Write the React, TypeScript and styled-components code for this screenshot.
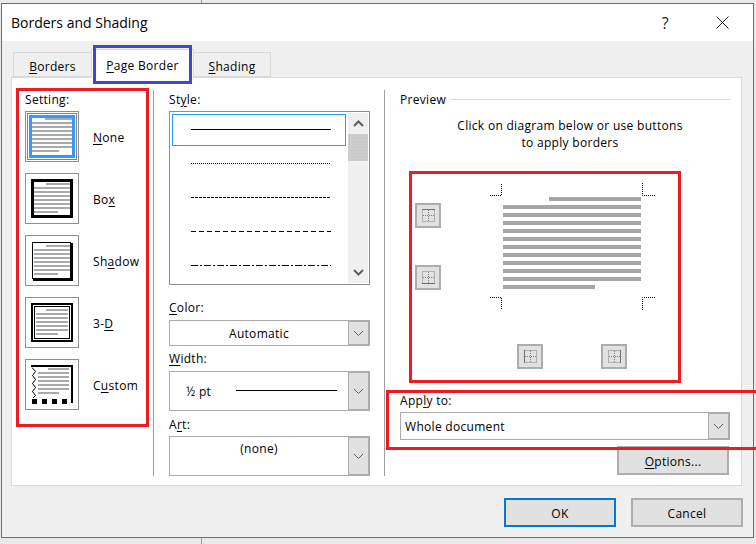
import React from "react";
import styled, { createGlobalStyle } from "styled-components";

const Global = createGlobalStyle`
  html, body { margin: 0; padding: 0; }
  body { font-family: "Open Sans", "Noto Sans", sans-serif; font-size: 12px; letter-spacing: 0.3px; color: #000; }
  * { box-sizing: border-box; }
  u { text-underline-offset: 2px; text-decoration-thickness: 1px; }
`;

const Page = styled.div`
  position: relative;
  width: 756px;
  height: 544px;
  overflow: hidden;
  padding: 3px 2px 6px 1px;
  background: linear-gradient(#9c9c9c, #9c9c9c) 201px 0 / 1px 100% no-repeat, #e9e9e9;
`;
const Dialog = styled.div`
  width: 753px;
  height: 535px;
  display: flex;
  flex-direction: column;
  background: #f0f0f0;
  border: 1px solid #2f7fc1;
`;
const TitleBar = styled.div`
  height: 37px;
  flex: none;
  display: flex;
  align-items: center;
  background: #fff;
  padding: 0 24px 0 9px;
`;
const Title = styled.div`
  font-size: 14px;
  letter-spacing: 0;
  flex: 1;
`;
const Help = styled.div`
  font-size: 16px;
  margin-right: 47px;
  color: #222;
`;
const TabRow = styled.div`
  height: 36px;
  flex: none;
  display: flex;
  align-items: flex-end;
  padding-left: 12px;
`;
const Tab = styled.div<{ $active?: boolean; $w: number }>`
  width: ${(p) => p.$w}px;
  height: ${(p) => (p.$active ? 29 : 25)}px;
  margin-bottom: ${(p) => (p.$active ? -1 : 0)}px;
  margin-left: -1px;
  background: ${(p) => (p.$active ? "#fff" : "#f0f0f0")};
  border: 1px solid #d9d9d9;
  border-bottom: ${(p) => (p.$active ? "none" : "1px solid #d9d9d9")};
  display: flex;
  align-items: center;
  justify-content: center;
  padding-top: ${(p) => (p.$active ? 2 : 3)}px;
  position: relative;
  z-index: ${(p) => (p.$active ? 1 : 0)};
`;
const Panel = styled.div`
  margin-left: 9px;
  width: 731px;
  height: 409px;
  flex: none;
  display: flex;
  background: #fff;
  border: 1px solid #d9d9d9;
`;
const SettingColumn = styled.div`
  width: 141px;
  flex: none;
  padding: 14px 0 0 13px;
`;
const Divider = styled.div`
  width: 1px;
  height: 386px;
  margin-top: 12px;
  flex: none;
  background: #a0a0a0;
`;
const StyleColumn = styled.div`
  width: 230px;
  flex: none;
  padding: 14px 14px 0 15px;
`;
const PreviewColumn = styled.div`
  width: 345px;
  flex: none;
  padding: 13px 0 0 15px;
`;
const FieldLabel = styled.div<{ $top?: number; $bottom?: number; $nudge?: number }>`
  height: 16px;
  line-height: 16px;
  margin-top: ${(p) => p.$top ?? 0}px;
  margin-bottom: ${(p) => p.$bottom ?? 4}px;
  padding-top: ${(p) => p.$nudge ?? 0}px;
`;
const OptionList = styled.div`
  display: flex;
  flex-direction: column;
  gap: 11px;
`;
const OptionRow = styled.div`
  display: flex;
  align-items: center;
  gap: 14px;
`;
const OptionText = styled.span`
  padding-top: 2px;
`;
const OptionButton = styled.div`
  width: 54px;
  height: 51px;
  border: 1px solid #8f8f8f;
  background: #fff;
  flex: none;
  svg { display: block; }
`;
const StyleList = styled.div`
  width: 201px;
  height: 174px;
  display: flex;
  border: 1px solid #8f8f8f;
  padding: 1px;
`;
const StyleRows = styled.div`
  width: 177px;
  flex: none;
  padding: 1px 2px 0 1px;
  display: flex;
  flex-direction: column;
  gap: 2px;
`;
const StyleRow = styled.div<{ $selected?: boolean }>`
  height: 32px;
  flex: none;
  border: 1px solid ${(p) => (p.$selected ? "#3399ff" : "transparent")};
  padding: 0 0 2px 18px;
  display: flex;
  align-items: center;
  svg { display: block; }
`;
const Scrollbar = styled.div`
  width: 20px;
  flex: none;
  display: flex;
  flex-direction: column;
  align-items: center;
  background: #f0f0f0;
`;
const ScrollEnd = styled.div`
  height: 21px;
  flex: none;
  display: flex;
  align-items: center;
  justify-content: center;
`;
const ScrollTrack = styled.div`
  flex: 1;
  width: 100%;
`;
const ScrollThumb = styled.div`
  height: 27px;
  width: 100%;
  background-color: #cdcdcd;
  background-image: radial-gradient(#c3c3c3 0.6px, transparent 0.7px);
  background-size: 3px 3px;
`;
const Field = styled.div<{ $h: number; $w?: number }>`
  width: ${(p) => p.$w ?? 201}px;
  height: ${(p) => p.$h}px;
  display: flex;
  background: #fff;
  border: 1px solid #ababab;
`;
const FieldValue = styled.div<{ $mode?: "center" | "top" | "left" | "sample" }>`
  flex: 1;
  min-width: 0;
  display: flex;
  line-height: 16px;
  align-items: ${(p) => (p.$mode === "top" ? "flex-start" : "center")};
  justify-content: ${(p) => (p.$mode === "left" || p.$mode === "sample" ? "flex-start" : "center")};
  padding-top: ${(p) => (p.$mode === "top" ? 4 : 2)}px;
  padding-left: ${(p) => (p.$mode === "left" ? 4 : p.$mode === "sample" ? 16 : 0)}px;
`;
const WidthSample = styled.div`
  width: 101px;
  height: 1px;
  margin-left: auto;
  margin-right: 11px;
  margin-top: -3px;
  background: #000;
`;
const FieldArrow = styled.div`
  width: 22px;
  flex: none;
  margin: -1px -1px -1px 0;
  display: flex;
  align-items: center;
  justify-content: center;
  background: #e1e1e1;
  border: 2px solid #adadad;
  border-left-width: 1px;
`;
const PreviewHeader = styled.div`
  height: 16px;
  display: flex;
  align-items: center;
  width: 330px;
`;
const PreviewRule = styled.div`
  flex: 1;
  height: 1px;
  margin-left: 4px;
  background: #d9d9d9;
`;
const Instructions = styled.div`
  margin: 10px 0 0 5px;
  width: 330px;
  text-align: center;
  line-height: 17px;
`;
const DiagramTop = styled.div`
  margin-top: 30px;
  display: flex;
  padding-left: 15px;
  gap: 47px;
`;
const SideButtons = styled.div`
  padding-top: 22px;
  display: flex;
  flex-direction: column;
  gap: 37px;
`;
const BottomButtons = styled.div`
  margin-top: 32px;
  padding-left: 117px;
  display: flex;
  gap: 58px;
`;
const EdgeButton = styled.div`
  width: 26px;
  height: 25px;
  display: flex;
  align-items: center;
  justify-content: center;
  background: #e1e1e1;
  border: 2px solid #adadad;
  flex: none;
`;
const OptionsRow = styled.div`
  width: 329px;
  margin-top: 6px;
  display: flex;
  justify-content: flex-end;
`;
const Push = styled.div<{ $primary?: boolean }>`
  width: 112px;
  height: 29px;
  display: flex;
  align-items: center;
  justify-content: center;
  padding-top: 2px;
  background: #e1e1e1;
  border: ${(p) => (p.$primary ? "2px solid #0078d7" : "2px solid #adadad")};
`;
const Footer = styled.div`
  flex: 1;
  display: flex;
  justify-content: flex-end;
  gap: 15px;
  padding: 12px 10px 0 0;
`;
const Annotation = styled.div<{ $x: number; $y: number; $w: number; $h: number; $blue?: boolean }>`
  position: absolute;
  left: ${(p) => p.$x}px;
  top: ${(p) => p.$y}px;
  width: ${(p) => p.$w}px;
  height: ${(p) => p.$h}px;
  border: 3px solid ${(p) => (p.$blue ? "#3f48cc" : "#ed1c24")};
  z-index: 5;
  pointer-events: none;
`;

const G = "#a9a9a9";

function TextLines({ x, w, short, y, rows, lastW }: { x: number; w: number; short: number; y: number; rows: number; lastW: number }) {
  return (
    <g fill={G}>
      {Array.from({ length: rows }).map((_, i) => {
        const first = i === 0;
        const last = i === rows - 1;
        const rx = first ? x + w - short : x;
        const rw = first ? short : last ? lastW : w;
        return <rect key={i} x={rx} y={y + i * 4} width={rw} height={2} />;
      })}
    </g>
  );
}

const Thumb = ({ children }: { children: React.ReactNode }) => (
  <OptionButton>
    <svg width="52" height="49" viewBox="0 0 52 49">
      {children}
    </svg>
  </OptionButton>
);

const NoneIcon = () => (
  <Thumb>
    <rect x="1.5" y="1.5" width="49" height="46" fill="none" stroke="#000" strokeDasharray="1 1" />
    <rect x="4.5" y="4.5" width="43" height="40" fill="#fff" stroke="#3399ff" strokeWidth="3" />
    <TextLines x={6} w={40} short={27} y={6} rows={9} lastW={27} />
  </Thumb>
);
const BoxIcon = () => (
  <Thumb>
    <rect x="6.5" y="6.5" width="39" height="36" fill="none" stroke="#000" strokeWidth="3" />
    <TextLines x={8} w={36} short={24} y={9} rows={8} lastW={24} />
  </Thumb>
);
const ShadowIcon = () => (
  <Thumb>
    <rect x="6.5" y="6.5" width="38" height="36" fill="none" stroke="#000" />
    <path d="M46 7V44H7" fill="none" stroke="#000" strokeWidth="2" />
    <TextLines x={8} w={36} short={24} y={9} rows={8} lastW={24} />
  </Thumb>
);
const ThreeDIcon = () => (
  <Thumb>
    <rect x="6" y="6" width="40" height="37" fill="none" stroke="#000" strokeWidth="2" />
    <rect x="8.5" y="8.5" width="35" height="32" fill="none" stroke="#000" />
    <TextLines x={10} w={32} short={22} y={11} rows={7} lastW={22} />
  </Thumb>
);
const CustomIcon = () => (
  <Thumb>
    <rect x="5" y="5" width="42" height="2" fill="#000" />
    <rect x="45" y="5" width="2" height="38" fill="#000" />
    <path
      d="M6 7.5L9.5 11.5L6.5 15.5L9.5 19.5L6.5 23.5L9.5 27.5L6.5 31.5L9.5 35.5L7 38"
      fill="none"
      stroke="#000"
      strokeWidth="1"
    />
    <g fill="#000">
      <rect x="6" y="39" width="5" height="5" />
      <rect x="16" y="39" width="5" height="5" />
      <rect x="26" y="39" width="5" height="5" />
      <rect x="36" y="39" width="5" height="5" />
    </g>
    <TextLines x={12} w={31} short={21} y={8} rows={7} lastW={21} />
  </Thumb>
);

const DashLine = ({ dash }: { dash?: string }) => (
  <svg width="140" height="1" viewBox="0 0 140 1">
    <line x1="0" y1="0.5" x2="140" y2="0.5" stroke="#000" strokeWidth="1" strokeDasharray={dash} />
  </svg>
);

const Chevron = ({ up, bold }: { up?: boolean; bold?: boolean }) => (
  <svg width="11" height="7" viewBox="0 0 11 7">
    <path
      d={up ? "M1 6L5.5 1.5L10 6" : "M1 1L5.5 5.5L10 1"}
      fill="none"
      stroke="#606060"
      strokeWidth={bold ? 2 : 1}
    />
  </svg>
);

const EdgeIcon = ({ side }: { side: "top" | "bottom" | "left" | "right" }) => {
  const solid = {
    top: "M0 0.5H13",
    bottom: "M0 12.5H13",
    left: "M0.5 0V13",
    right: "M12.5 0V13",
  }[side];
  return (
    <svg width="13" height="13" viewBox="0 0 13 13">
      <g fill="none" stroke="#808080" strokeDasharray="1 1">
        <rect x="0.5" y="0.5" width="12" height="12" />
        <path d="M6.5 1V12M1 6.5H12" />
      </g>
      <path d={solid} stroke="#707070" fill="none" />
    </svg>
  );
};

const PreviewPage = () => (
  <svg width="169" height="131" viewBox="0 0 169 131">
    <g fill="none" stroke="#000" strokeDasharray="1 1">
      <path d="M2 14.5H13.5V2" />
      <path d="M154.5 2V14.5H167" />
      <path d="M2 116.5H13.5V129" />
      <path d="M154.5 129V116.5H167" />
    </g>
    <g fill="#a6a6a6">
      <rect x="61" y="16" width="92" height="4" />
      {[24, 32, 40, 48, 56, 64, 72, 80, 88, 96].map((y) => (
        <rect key={y} x="15" y={y} width="138" height="4" />
      ))}
      <rect x="15" y="104" width="92" height="4" />
    </g>
  </svg>
);

export default function App() {
  return (
    <>
      <Global />
      <Page>
        <Dialog>
          <TitleBar>
            <Title>Borders and Shading</Title>
            <Help>?</Help>
            <svg width="13" height="13" viewBox="0 0 13 13">
              <path d="M0.5 0.5L12.5 12.5M12.5 0.5L0.5 12.5" stroke="#222" strokeWidth="1" fill="none" />
            </svg>
          </TitleBar>
          <TabRow>
            <Tab $w={79}><span><u>B</u>orders</span></Tab>
            <Tab $w={103} $active><span><u>P</u>age Border</span></Tab>
            <Tab $w={78}><span><u>S</u>hading</span></Tab>
          </TabRow>
          <Panel>
            <SettingColumn>
              <FieldLabel $bottom={3}>Setting:</FieldLabel>
              <OptionList>
                <OptionRow><NoneIcon /><OptionText><u>N</u>one</OptionText></OptionRow>
                <OptionRow><BoxIcon /><OptionText>Bo<u>x</u></OptionText></OptionRow>
                <OptionRow><ShadowIcon /><OptionText>Sh<u>a</u>dow</OptionText></OptionRow>
                <OptionRow><ThreeDIcon /><OptionText>3-<u>D</u></OptionText></OptionRow>
                <OptionRow><CustomIcon /><OptionText>C<u>u</u>stom</OptionText></OptionRow>
              </OptionList>
            </SettingColumn>
            <Divider />
            <StyleColumn>
              <FieldLabel $bottom={3}>St<u>y</u>le:</FieldLabel>
              <StyleList>
                <StyleRows>
                  <StyleRow $selected><DashLine /></StyleRow>
                  <StyleRow><DashLine dash="1 1" /></StyleRow>
                  <StyleRow><DashLine dash="3 1" /></StyleRow>
                  <StyleRow><DashLine dash="5 3" /></StyleRow>
                  <StyleRow><DashLine dash="7 2 2 2" /></StyleRow>
                </StyleRows>
                <Scrollbar>
                  <ScrollEnd><Chevron up bold /></ScrollEnd>
                  <ScrollThumb />
                  <ScrollTrack />
                  <ScrollEnd><Chevron bold /></ScrollEnd>
                </Scrollbar>
              </StyleList>
              <FieldLabel $top={15}><u>C</u>olor:</FieldLabel>
              <Field $h={26}>
                <FieldValue $mode="center">Automatic</FieldValue>
                <FieldArrow><Chevron /></FieldArrow>
              </Field>
              <FieldLabel $top={5}><u>W</u>idth:</FieldLabel>
              <Field $h={40}>
                <FieldValue $mode="sample"><span>½ pt</span><WidthSample /></FieldValue>
                <FieldArrow><Chevron /></FieldArrow>
              </Field>
              <FieldLabel $top={6} $bottom={3}>A<u>r</u>t:</FieldLabel>
              <Field $h={40}>
                <FieldValue $mode="top">(none)</FieldValue>
                <FieldArrow><Chevron /></FieldArrow>
              </Field>
            </StyleColumn>
            <Divider />
            <PreviewColumn>
              <PreviewHeader>
                <span>Preview</span>
                <PreviewRule />
              </PreviewHeader>
              <Instructions>
                Click on diagram below or use buttons
                <br />
                to apply borders
              </Instructions>
              <DiagramTop>
                <SideButtons>
                  <EdgeButton><EdgeIcon side="top" /></EdgeButton>
                  <EdgeButton><EdgeIcon side="bottom" /></EdgeButton>
                </SideButtons>
                <PreviewPage />
              </DiagramTop>
              <BottomButtons>
                <EdgeButton><EdgeIcon side="left" /></EdgeButton>
                <EdgeButton><EdgeIcon side="right" /></EdgeButton>
              </BottomButtons>
              <FieldLabel $top={23} $nudge={1}>App<u>l</u>y to:</FieldLabel>
              <Field $h={28} $w={330}>
                <FieldValue $mode="left">Whole document</FieldValue>
                <FieldArrow><Chevron /></FieldArrow>
              </Field>
              <OptionsRow>
                <Push><span><u>O</u>ptions...</span></Push>
              </OptionsRow>
            </PreviewColumn>
          </Panel>
          <Footer>
            <Push $primary>OK</Push>
            <Push>Cancel</Push>
          </Footer>
        </Dialog>
        <Annotation $blue $x={93} $y={45} $w={99} $h={39} />
        <Annotation $x={16} $y={88} $w={133} $h={339} />
        <Annotation $x={409} $y={171} $w={272} $h={212} />
        <Annotation $x={386} $y={390} $w={400} $h={60} />
      </Page>
    </>
  );
}
